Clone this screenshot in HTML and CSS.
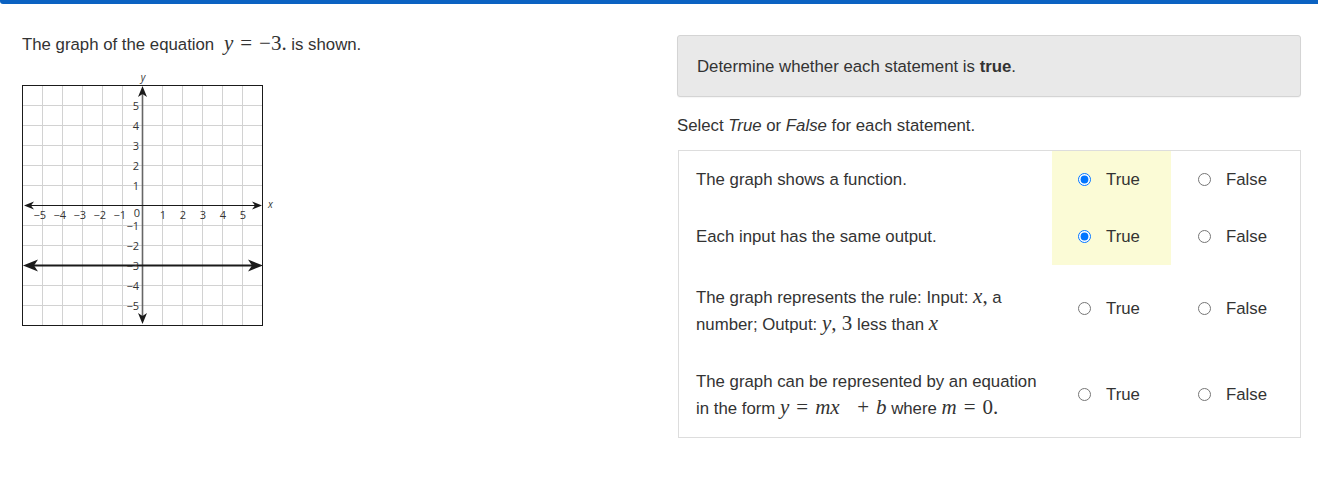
FILE: index.html
```html
<!DOCTYPE html>
<html>
<head>
<meta charset="utf-8">
<link rel="stylesheet" href="styles.css">
</head>
<body>
<div class="topbar"></div>
<div class="page">
  <div class="left">
    <p class="prompt">The graph of the equation <span class="math lead"><i>y</i><span class="op">=</span>−3.</span> is shown.</p>
    <svg class="graph" width="258" height="258" viewBox="0 0 258 258">
      <g stroke="#d2d2d2" stroke-width="1">
        <line x1="20.5" y1="14" x2="20.5" y2="254"/>
        <line x1="40.5" y1="14" x2="40.5" y2="254"/>
        <line x1="60.5" y1="14" x2="60.5" y2="254"/>
        <line x1="80.5" y1="14" x2="80.5" y2="254"/>
        <line x1="100.5" y1="14" x2="100.5" y2="254"/>
        <line x1="140.5" y1="14" x2="140.5" y2="254"/>
        <line x1="160.5" y1="14" x2="160.5" y2="254"/>
        <line x1="180.5" y1="14" x2="180.5" y2="254"/>
        <line x1="200.5" y1="14" x2="200.5" y2="254"/>
        <line x1="220.5" y1="14" x2="220.5" y2="254"/>
        <line x1="0" y1="34.5" x2="240" y2="34.5"/>
        <line x1="0" y1="54.5" x2="240" y2="54.5"/>
        <line x1="0" y1="74.5" x2="240" y2="74.5"/>
        <line x1="0" y1="94.5" x2="240" y2="94.5"/>
        <line x1="0" y1="114.5" x2="240" y2="114.5"/>
        <line x1="0" y1="154.5" x2="240" y2="154.5"/>
        <line x1="0" y1="174.5" x2="240" y2="174.5"/>
        <line x1="0" y1="194.5" x2="240" y2="194.5"/>
        <line x1="0" y1="214.5" x2="240" y2="214.5"/>
        <line x1="0" y1="234.5" x2="240" y2="234.5"/>
      </g>
      <rect x="0.5" y="14.5" width="240" height="240" fill="none" stroke="#1a1a1a" stroke-width="1"/>
      <line x1="120.5" y1="20" x2="120.5" y2="248" stroke="#666" stroke-width="1.6"/>
      <polygon points="120.5,15 116,26 120.5,23 125,26" fill="#1a1a1a"/>
      <polygon points="120.5,253 116,242 120.5,245 125,242" fill="#1a1a1a"/>
      <line x1="6" y1="134.5" x2="236" y2="134.5" stroke="#1a1a1a" stroke-width="1"/>
      <polygon points="2,134.5 12,130.5 9,134.5 12,138.5" fill="#1a1a1a"/>
      <polygon points="240,134.5 230,130.5 233,134.5 230,138.5" fill="#1a1a1a"/>
      <line x1="8" y1="194.5" x2="234" y2="194.5" stroke="#1a1a1a" stroke-width="2"/>
      <polygon points="1,194.5 16,188.5 12,194.5 16,200.5" fill="#1a1a1a"/>
      <polygon points="241,194.5 226,188.5 230,194.5 226,200.5" fill="#1a1a1a"/>
      <text class="axis-name" x="121" y="10" text-anchor="middle">y</text>
      <text class="axis-name" x="246" y="137">x</text>
      <g class="tick" text-anchor="end">
        <text x="24" y="148">−5</text>
        <text x="44" y="148">−4</text>
        <text x="64" y="148">−3</text>
        <text x="84" y="148">−2</text>
        <text x="104" y="148">−1</text>
      </g>
      <g class="tick" text-anchor="middle">
        <text x="115" y="146">0</text>
        <text x="141" y="148">1</text>
        <text x="161" y="148">2</text>
        <text x="181" y="148">3</text>
        <text x="201" y="148">4</text>
        <text x="221" y="148">5</text>
      </g>
      <g class="tick" text-anchor="end">
        <text x="117" y="38.5">5</text>
        <text x="117" y="58.5">4</text>
        <text x="117" y="78.5">3</text>
        <text x="117" y="98.5">2</text>
        <text x="117" y="118.5">1</text>
        <text x="117" y="158.5">−1</text>
        <text x="117" y="178.5">−2</text>
        <text x="117" y="198.5">−3</text>
        <text x="117" y="218.5">−4</text>
        <text x="117" y="238.5">−5</text>
      </g>
    </svg>
  </div>
  <div class="right">
    <div class="instructions">Determine whether each statement is <b>true</b>.</div>
    <p class="select">Select <i>True</i> or <i>False</i> for each statement.</p>
    <div class="choices">
      <div class="stmt r1"><div class="stmt-text">The graph shows a function.</div></div>
      <div class="opt chosen r1"><label><input type="radio" name="q1" checked><span>True</span></label></div>
      <div class="opt opt-false r1"><label><input type="radio" name="q1"><span>False</span></label></div>

      <div class="stmt r2"><div class="stmt-text">Each input has the same output.</div></div>
      <div class="opt chosen r2"><label><input type="radio" name="q2" checked><span>True</span></label></div>
      <div class="opt opt-false r2"><label><input type="radio" name="q2"><span>False</span></label></div>

      <div class="stmt r3"><div class="stmt-text">The graph represents the rule: Input: <span class="math"><i>x</i>,</span> a<br>number; Output: <span class="math"><i>y</i>, 3</span> less than <span class="math"><i>x</i></span></div></div>
      <div class="opt r3"><label><input type="radio" name="q3"><span>True</span></label></div>
      <div class="opt opt-false r3"><label><input type="radio" name="q3"><span>False</span></label></div>

      <div class="stmt r4"><div class="stmt-text">The graph can be represented by an equation<br>in the form <span class="math"><i>y</i><span class="op">=</span><i>mx</i>&nbsp;&nbsp;<span class="op">+</span><i>b</i></span> where <span class="math"><i>m</i><span class="op">=</span>0.</span></div></div>
      <div class="opt r4"><label><input type="radio" name="q4"><span>True</span></label></div>
      <div class="opt opt-false r4"><label><input type="radio" name="q4"><span>False</span></label></div>
    </div>
  </div>
</div>
</body>
</html>
```

FILE: styles.css
```css
html, body {
  margin: 0;
  padding: 0;
  background: #ffffff;
}
body {
  font-family: "Liberation Sans", Arial, sans-serif;
  font-size: 16.8px;
  color: #333333;
}
.topbar {
  height: 4px;
  background: #0b62c2;
  border-bottom-left-radius: 3px;
}
.page {
  display: flex;
  padding: 31px 17px 0 22px;
}
.left {
  width: 655px;
  flex: none;
}
.right {
  width: 624px;
  flex: none;
}
.prompt {
  margin: -2px 0 0 0;
  line-height: 24px;
  height: 24px;
}
.math {
  font-family: "Liberation Serif", "DejaVu Serif", serif;
  font-size: 21px;
  line-height: 1;
  white-space: nowrap;
}
.math i {
  font-style: italic;
}
.math .op {
  padding: 0 7px;
}
.math.lead {
  padding-left: 5px;
}
.graph {
  display: block;
  margin-top: 14px;
}
.tick {
  font-family: "Open Sans", "DejaVu Sans", sans-serif;
  font-size: 11px;
  fill: #333333;
}
.axis-name {
  font-family: "Open Sans", "DejaVu Sans", sans-serif;
  font-size: 10px;
  font-style: italic;
  fill: #333333;
}
.instructions {
  background: #e9e9e9;
  border: 1px solid #d4d4d4;
  border-radius: 3px;
  padding: 19px 19px 17px;
  line-height: 24px;
  box-shadow: 0 1px 1px rgba(0, 0, 0, 0.04);
}
.select {
  margin: 17px 0 0 0;
  line-height: 24px;
}
.choices {
  margin: 12px 0 0 1px;
  width: 623px;
  box-sizing: border-box;
  border: 1px solid #dddddd;
  display: grid;
  grid-template-columns: 373px 119px 129px;
  grid-template-rows: 57px 57px 86px 86px;
}
.stmt {
  padding-left: 17px;
  display: flex;
  align-items: center;
}
.stmt-text {
  line-height: 27px;
}
.stmt.r3 {
  padding-top: 6px;
}
.stmt.r4 {
  padding-top: 2px;
}
.opt {
  display: flex;
  align-items: center;
  padding-left: 26px;
}
.opt.r3,
.opt.r4 {
  padding-top: 1px;
}
.opt-false {
  padding-left: 27px;
}
.chosen {
  background: #fbfbd6;
}
.opt label {
  display: flex;
  align-items: center;
  gap: 15px;
}
.opt input {
  margin: 0;
  width: 13px;
  height: 13px;
}
```
